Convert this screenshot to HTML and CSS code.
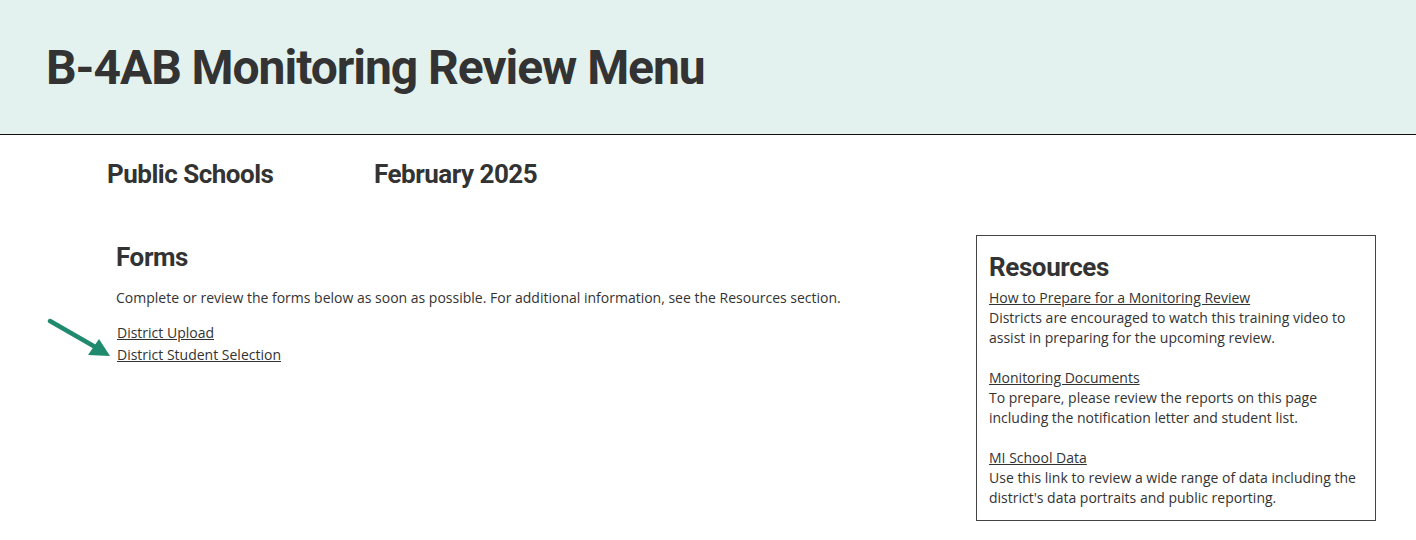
FILE: index.html
```html
<!DOCTYPE html>
<html lang="en">
<head>
<meta charset="utf-8">
<title>B-4AB Monitoring Review Menu</title>
<link rel="stylesheet" href="styles.css">
</head>
<body>
<header class="banner">
  <h1 class="banner-title">B-4AB Monitoring Review Menu</h1>
</header>
<div class="meta">
  <span class="meta-item meta-district">Public Schools</span>
  <span class="meta-item">February 2025</span>
</div>
<main class="content">
  <section class="forms">
    <h2 class="section-title">Forms</h2>
    <p class="intro">Complete or review the forms below as soon as possible. For additional information, see the Resources section.</p>
    <ul class="form-links">
      <li><a href="#">District Upload</a></li>
      <li class="has-arrow">
        <svg class="pointer" width="66" height="40" viewBox="0 0 66 40" aria-hidden="true">
          <line x1="3" y1="3" x2="50" y2="30" stroke="#1f8a6e" stroke-width="4.5" stroke-linecap="round"/>
          <polygon points="63,38 41,37 52,21" fill="#1f8a6e"/>
        </svg>
        <a href="#">District Student Selection</a>
      </li>
    </ul>
  </section>
  <aside class="resources">
    <h2 class="section-title resources-title">Resources</h2>
    <div class="res-item">
      <a href="#">How to Prepare for a Monitoring Review</a>
      <p>Districts are encouraged to watch this training video to assist in preparing for the upcoming review.</p>
    </div>
    <div class="res-item">
      <a href="#">Monitoring Documents</a>
      <p>To prepare, please review the reports on this page including the notification letter and student list.</p>
    </div>
    <div class="res-item">
      <a href="#">MI School Data</a>
      <p>Use this link to review a wide range of data including the district's data portraits and public reporting.</p>
    </div>
  </aside>
</main>
</body>
</html>
```

FILE: styles.css
```css
* { box-sizing: border-box; }
html, body { margin: 0; padding: 0; background: #fff; }
body {
  font-family: "Open Sans", "Liberation Sans", sans-serif;
  font-size: 14px;
  color: #333;
}
.banner {
  background: #e3f2ef;
  height: 135px;
  border-bottom: 1.5px solid #111;
  display: flex;
  align-items: center;
  padding-left: 46px;
}
.banner-title {
  margin: 0;
  font-family: Roboto, "Liberation Sans", sans-serif;
  font-weight: 700;
  font-size: 48px;
  letter-spacing: -1.05px;
  color: #333;
  padding-top: 1px;
}
.meta {
  display: flex;
  padding: 24px 0 0 107px;
  height: 80px;
  font-family: Roboto, "Liberation Sans", sans-serif;
  font-weight: 700;
  font-size: 26px;
  letter-spacing: -0.5px;
  color: #333;
}
.meta-district { width: 267px; }
.content {
  display: flex;
  justify-content: space-between;
  align-items: flex-start;
  padding: 20px 40px 0 116px;
}
.section-title {
  margin: 0;
  font-family: Roboto, "Liberation Sans", sans-serif;
  font-weight: 700;
  font-size: 26px;
  letter-spacing: -0.4px;
  color: #333;
}
.forms { padding-top: 7px; }
.intro { margin: 16px 0 14px; line-height: 20px; }
.form-links { list-style: none; margin: 0; padding: 0 0 0 1px; line-height: 22px; }
.form-links a { color: #333; }
.has-arrow { position: relative; }
.pointer { position: absolute; left: -70px; top: -26px; }
.resources {
  width: 400px;
  border: 1px solid #444;
  padding: 21px 12px 12px 12px;
  line-height: 20px;
}
.resources-title { margin-bottom: 11px; }
.res-item { margin-bottom: 20px; }
.res-item:last-child { margin-bottom: 0; }
.res-item a { color: #333; }
.res-item p { margin: 0; }
```
